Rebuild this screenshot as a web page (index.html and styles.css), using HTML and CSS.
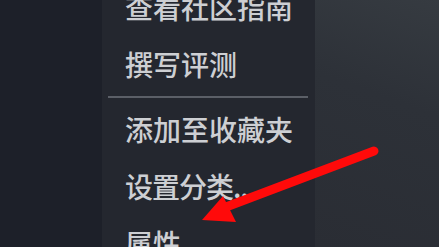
FILE: index.html
```html
<!DOCTYPE html>
<html>
<head>
  <title>属性</title>
  <link rel="stylesheet" href="styles.css">
</head>
<body>
  <div class="screen">
    <div class="side"></div>
    <div class="menu">
      <ul class="items">
        <li>查看社区指南</li>
        <li>撰写评测</li>
        <li class="sep"></li>
        <li>添加至收藏夹</li>
        <li class="tight">设置分类...</li>
        <li>属性</li>
      </ul>
    </div>
    <div class="rest"></div>

    <svg class="arrow" width="439" height="247" viewBox="0 0 439 247">
      <line x1="374" y1="151" x2="226" y2="207" stroke="#ff0a0a" stroke-width="9" stroke-linecap="round"/>
      <polygon points="202,220 223,196 236,222" fill="#ff0a0a"/>
    </svg>
  </div>
</body>
</html>
```

FILE: styles.css
```css
html, body {
  margin: 0;
  padding: 0;
  background: #1d2028;
}

.screen {
  position: relative;
  display: flex;
  width: 439px;
  height: 247px;
  overflow: hidden;
  font-family: "Noto Sans CJK SC", "Noto Sans", sans-serif;
}

.side {
  width: 102px;
  background: #1d2029;
}

.menu {
  width: 213px;
  background: #24272f;
}

.rest {
  flex: 1;
  background: linear-gradient(200deg, #363b41 0%, #2d3138 40%, #2a2d34 100%);
}

.items {
  list-style: none;
  margin: -21px 0 0 0;
  padding: 0;
}

.items li {
  height: 57px;
  line-height: 57px;
  padding-left: 23px;
  font-size: 28px;
  font-weight: 500;
  color: #cdcfd3;
  white-space: nowrap;
}

.items li.tight {
  letter-spacing: -1px;
}

.items li.sep {
  height: 2px;
  margin: 3px 7px 3px 6px;
  padding: 0;
  background: #5b5f67;
}

.arrow {
  position: absolute;
  left: 0;
  top: 0;
}
```
